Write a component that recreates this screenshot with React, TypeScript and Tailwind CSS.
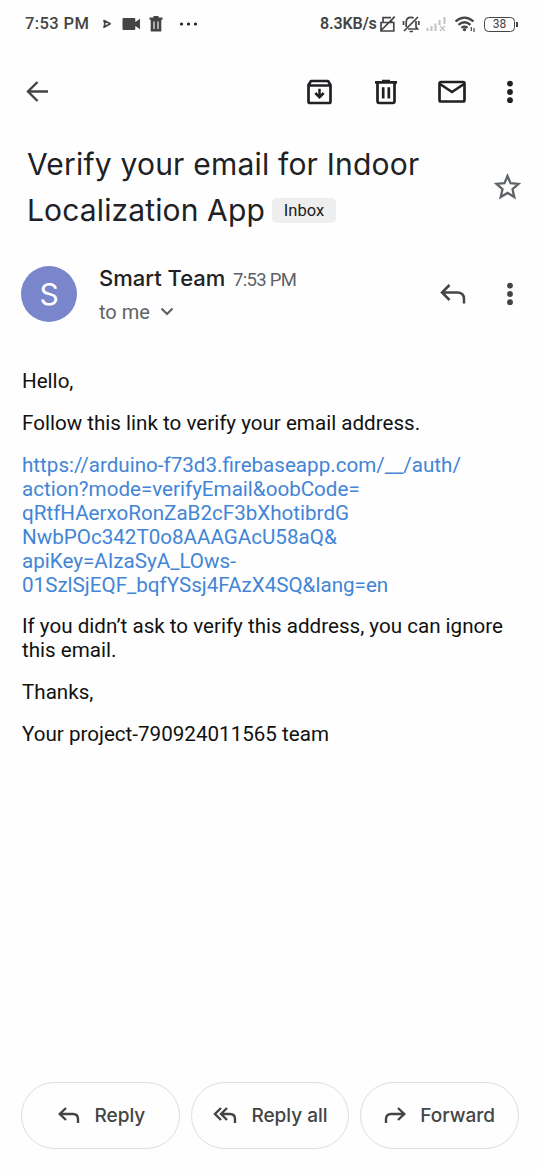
import type { ReactNode } from "react";

type IconProps = { w: number; h: number; className?: string; children: ReactNode };

function Icon({ w, h, className = "", children }: IconProps) {
  return (
    <svg width={w} height={h} viewBox={`0 0 ${w} ${h}`} fill="none" stroke="currentColor" className={`shrink-0 ${className}`}>
      {children}
    </svg>
  );
}

function Dots({ className = "" }: { className?: string }) {
  return (
    <Icon w={8} h={24} className={className}>
      <g fill="currentColor" stroke="none">
        <circle cx="4" cy="3.6" r="2.9" />
        <circle cx="4" cy="12" r="2.9" />
        <circle cx="4" cy="20.2" r="2.9" />
      </g>
    </Icon>
  );
}

function StatusBar() {
  return (
    <div className="flex h-12 items-center pl-[25px] pr-[22px] text-[#444]">
      <span className="w-[65px] whitespace-nowrap text-[16.5px] font-medium tracking-[0.4px]">7:53 PM</span>
      <Icon w={10} h={10} className="ml-[12px]">
        <path d="M2 1.500 8.200 4.800 2 8.300Q3.600 4.900 2 1.500Z" strokeWidth="1.700" strokeLinejoin="round" />
      </Icon>
      <Icon w={19} h={14} className="ml-[10px]">
        <path d="M1.500 1h10.800q1 0 1 1v3L18 1.800v10.400L13.300 9v3q0 1-1 1H1.500q-1 0-1-1V2q0-1 1-1Z" fill="currentColor" stroke="none" />
      </Icon>
      <Icon w={14} h={16} className="ml-[8px]">
        <path d="M.5 1.500H4.500V0h5v1.500h4v2.300h-1.200V15.500H1.700V3.800H.5Z" fill="currentColor" stroke="none" />
        <path d="M5 5.500v7.500M9 5.500v7.500" stroke="white" strokeWidth="1.100" />
      </Icon>
      <Icon w={20} h={6} className="ml-[16px] text-[#222]">
        <g fill="currentColor" stroke="none">
          <circle cx="2.500" cy="3" r="1.600" />
          <circle cx="9.500" cy="3" r="1.600" />
          <circle cx="16.500" cy="3" r="1.600" />
        </g>
      </Icon>
      <span className="ml-auto w-[57px] whitespace-nowrap text-[16px] font-semibold tracking-[-0.100px]">8.3KB/s</span>
      <Icon w={17} h={18} className="ml-[2px]">
        <path d="M2 7.500V16H14.800V7.500M1.200 7.500H15.500M4 7.500V2.700H12M12.500 5V7.500M1.500 16 15.800 1.700" strokeWidth="1.700" />
      </Icon>
      <Icon w={18} h={18} className="ml-[6px]">
        <path d="M2 16 16 2M4.200 12V7.200Q4.200 2.300 9 2.300 10.500 2.300 11.600 3.100M14 6V12L15.500 14H6M7.500 16.500h3.500M1.500 6v4M16.800 6v4" strokeWidth="1.700" />
      </Icon>
      <Icon w={22} h={16} className="ml-[6px] text-[#c6c6c6]">
        <path d="M1.500 12v3M5.500 10v5M9.500 7.500V15M13.500 4v5M18.500 1v7" strokeWidth="2.200" />
        <path d="m14 10 5 5m0-5-5 5" strokeWidth="1.500" />
      </Icon>
      <Icon w={23} h={18} className="ml-[6px]">
        <path d="M1.500 6.500Q10.500-1.300 19.500 6.500M4.500 9.800Q10.500 4.700 16.500 9.800M7.500 12.800Q10.500 10.400 13.500 12.800" strokeWidth="2.200" />
        <circle cx="10.500" cy="14.700" r="1.600" fill="currentColor" stroke="none" />
        <path d="M17.300 12v4M20 13v4" strokeWidth="1.200" />
      </Icon>
      <div className="ml-[7px] flex items-center">
        <div className="flex h-[15px] w-[31px] items-center justify-center rounded-[4.500px] border-[1.500px] border-[#444] text-[12px] leading-none">38</div>
        <div className="ml-px h-[5px] w-[2px] bg-[#444]" />
      </div>
    </div>
  );
}

function Toolbar() {
  return (
    <div className="flex h-[87px] items-center pl-[26px] pr-[26px] text-[#202124]">
      <Icon w={24} h={24} className="text-[#444]">
        <path d="M22 11.500H2M11.500 2 2 11.500 11.500 21" strokeWidth="2.400" />
      </Icon>
      <Icon w={26} h={26} className="ml-auto">
        <path d="M2.500 6 5 2H22L24.500 6V22.500Q24.500 24 23 24H4Q2.500 24 2.500 22.500ZM2.500 6.500H24.500" strokeWidth="2.700" strokeLinejoin="round" />
        <path d="M13.500 9.800V18M9.300 14 13.500 18.200 17.700 14" strokeWidth="2.500" />
      </Icon>
      <Icon w={24} h={26} className="ml-[42px]">
        <path d="M1 3.300H23M8 2.200H16M3.500 3.500V22.300Q3.500 24 5.200 24H18.800Q20.500 24 20.500 22.300V3.500M9.200 8.300V19.500M14.800 8.300V19.500" strokeWidth="2.700" />
      </Icon>
      <Icon w={28} h={24} className="ml-[40px]">
        <rect x="1.500" y="2" width="25" height="19.500" rx="1.500" strokeWidth="2.700" />
        <path d="M2 4 14 12 26 4" strokeWidth="2.600" />
      </Icon>
      <Dots className="ml-[40px]" />
    </div>
  );
}

function Subject() {
  return (
    <div className="mt-[6px] flex h-[92px] items-center pl-[27px] pr-[19px]">
      <h1 className="flex-1 whitespace-nowrap font-['Inter'] text-[30px] leading-[46px] text-[#202124]">
        <span className="block tracking-[0.200px]">Verify your email for Indoor</span>
        <span className="flex items-center">
          <span className="w-[245px] tracking-[0.130px]">Localization App</span>
          <span className="mt-px flex h-[25px] w-16 items-center justify-center rounded-[5px] bg-[#eee] pt-[2px] font-[Roboto] text-[16.500px] leading-none tracking-normal">Inbox</span>
        </span>
      </h1>
      <Icon w={28} h={27} className="-mt-[2px] text-[#5f6368]">
        <path d="M14.500 3 17.500 10.200 25.500 10.900 19.500 16.200 21.300 24 14.500 19.900 7.700 24 9.500 16.200 3.500 10.900 11.500 10.200Z" strokeWidth="2.300" />
      </Icon>
    </div>
  );
}

function Sender() {
  return (
    <div className="mt-[28px] flex h-[66px] items-center pl-[21px] pr-[26px]">
      <div className="flex size-14 items-center justify-center rounded-full bg-[#7986cb] font-['Inter'] text-[30px] text-white">S</div>
      <div className="ml-[22px] flex-1 whitespace-nowrap text-[#5f6368]">
        <div className="flex h-[34px] items-baseline leading-[34px]">
          <span className="w-[134px] font-['Inter'] text-[22px] font-medium text-[#202124]">Smart Team</span>
          <span className="text-[18.500px] tracking-[-0.700px]">7:53 PM</span>
        </div>
        <div className="flex h-8 items-center pt-[2px]">
          <span className="w-[61px] text-[20px] leading-6">to me</span>
          <Icon w={14} h={10}>
            <path d="M1.500 1.500 7 7 12.500 1.500" strokeWidth="2.200" />
          </Icon>
        </div>
      </div>
      <Icon w={26} h={22} className="text-[#444]">
        <path d="M9.500 2 2 9.500 9.500 17M2 9.500H17Q24 9.500 24 16V20.500" strokeWidth="2.500" />
      </Icon>
      <Dots className="ml-[40px] text-[#444]" />
    </div>
  );
}

const linkLines = [
  "https://arduino-f73d3.firebaseapp.com/__/auth/",
  "action?mode=verifyEmail&oobCode=",
  "qRtfHAerxoRonZaB2cF3bXhotibrdG",
  "NwbPOc342T0o8AAAGAcU58aQ&",
  "apiKey=AIzaSyA_LOws-",
  "01SzlSjEQF_bqfYSsj4FAzX4SQ&lang=en",
];

function Message() {
  return (
    <div className="mt-[42.400px] flex flex-col gap-[17.700px] whitespace-nowrap pl-[22px] text-[20.600px] leading-[24px] text-[#111]">
      <p>Hello,</p>
      <p>Follow this link to verify your email address.</p>
      <p className="text-[#4285d6]">
        {linkLines.map((line) => (
          <span key={line} className="block">{line}</span>
        ))}
      </p>
      <p>
        If you didn’t ask to verify this address, you can ignore
        <br />
        this email.
      </p>
      <p>Thanks,</p>
      <p>Your project-790924011565 team</p>
    </div>
  );
}

function Action({ label, icon }: { label: string; icon: ReactNode }) {
  return (
    <button className="flex h-[67px] flex-1 items-center justify-center gap-[14px] whitespace-nowrap rounded-full border-[1.500px] border-[#dedede] pl-px font-['Inter'] text-[19px] font-medium text-[#444]">
      {icon}
      <span className="pt-[2px]">{label}</span>
    </button>
  );
}

function Actions() {
  return (
    <div className="mb-[21.500px] mt-auto flex gap-[11px] px-[21px]">
      <Action label="Reply" icon={<Icon w={22} h={17} className="ml-[2px]"><path d="M8 1 1.700 7 8 13M2 7H15Q20 7 20 12V16" strokeWidth="2.400" /></Icon>} />
      <Action label="Reply all" icon={<Icon w={24} h={17}><path d="M8 1 2 7 8 13M14 1 8 7 14 13M8 7H17Q22 7 22 12V16" strokeWidth="2.400" /></Icon>} />
      <Action label="Forward" icon={<Icon w={22} h={17} className="-ml-px"><path d="M14 1 20.300 7 14 13M20 7H7Q2 7 2 12V16" strokeWidth="2.400" /></Icon>} />
    </div>
  );
}

export default function App() {
  return (
    <main className="flex h-[1170px] w-[540px] flex-col overflow-hidden bg-[#fefefe] font-[Roboto,sans-serif]">
      <StatusBar />
      <Toolbar />
      <Subject />
      <Sender />
      <Message />
      <Actions />
    </main>
  );
}
